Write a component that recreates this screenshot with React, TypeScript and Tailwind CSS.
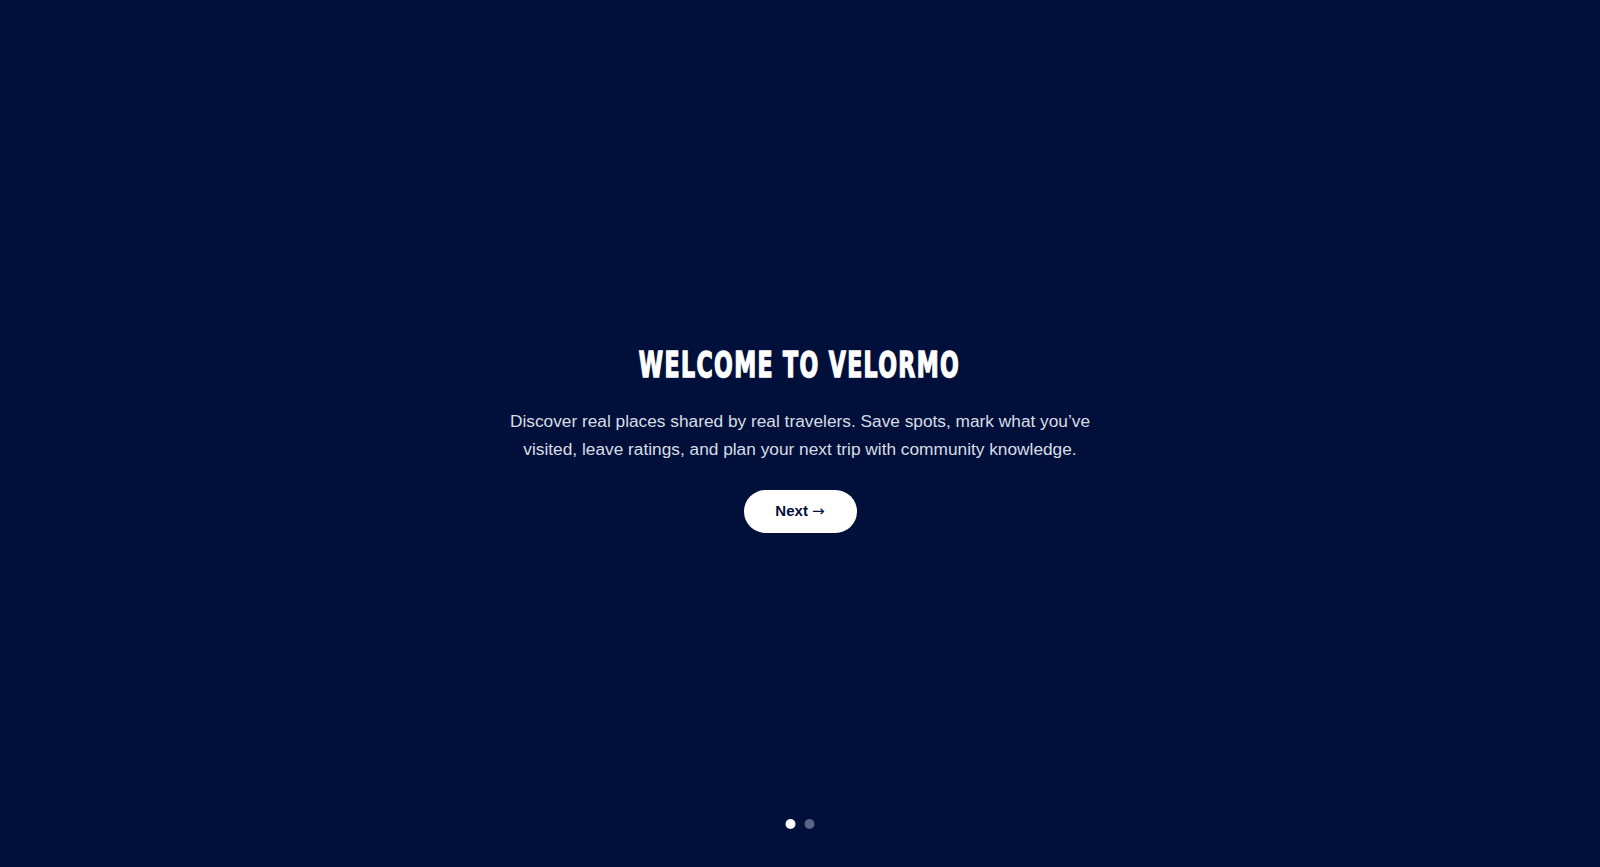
export default function App() {
  return (
    <div className="relative flex h-screen w-full items-center justify-center bg-[#00103a] pt-[10px] font-['Liberation_Sans',Arial,sans-serif]">
      <section className="flex flex-col items-center text-center">
        <h1 className="inline-block scale-x-[0.7] font-['DejaVu_Sans_Condensed','Liberation_Sans',sans-serif] text-[35px] font-bold uppercase leading-[40px] tracking-[2px] text-white [-webkit-text-stroke:1.4px_white]">
          Welcome to Velormo
        </h1>
        <p className="mt-[22px] max-w-[600px] text-[17.3px] leading-[28px] text-[#d9dde6]">
          Discover real places shared by real travelers. Save spots, mark what you’ve visited, leave ratings, and plan your next trip with community knowledge.
        </p>
        <button className="mt-[27px] h-[43px] w-[113px] rounded-full bg-white text-[15px] font-bold text-[#00103a]">
          Next <span className="font-['DejaVu_Sans',sans-serif] font-normal">→</span>
        </button>
      </section>
      <div className="absolute bottom-[38px] left-1/2 flex -translate-x-1/2 gap-[9px]">
        <span className="h-[10px] w-[10px] rounded-full bg-white" />
        <span className="h-[10px] w-[10px] rounded-full bg-[#5b6482]" />
      </div>
    </div>
  );
}
